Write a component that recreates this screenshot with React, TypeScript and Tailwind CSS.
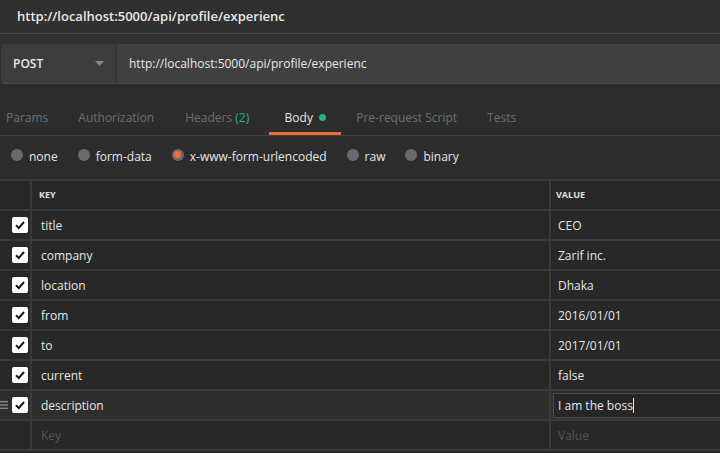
import React from "react";

const rows = [
  { k: "title", v: "CEO" },
  { k: "company", v: "Zarif inc." },
  { k: "location", v: "Dhaka" },
  { k: "from", v: "2016/01/01" },
  { k: "to", v: "2017/01/01" },
  { k: "current", v: "false" },
];

function Check() {
  return (
    <div className="w-[16px] h-[16px] rounded-[2px] bg-white flex items-center justify-center">
      <svg width="12" height="12" viewBox="0 0 12 12">
        <path d="M2 6.2 L4.8 9 L10 3" stroke="#1a1a1a" strokeWidth="2" fill="none" />
      </svg>
    </div>
  );
}

function Radio({ label, on }: { label: string; on?: boolean }) {
  return (
    <div className="flex items-center gap-[6px]">
      {on ? (
        <div className="w-[12px] h-[12px] rounded-full bg-[#6a6a6a] flex items-center justify-center -mt-[4px]">
          <div className="w-[7px] h-[7px] rounded-full bg-[#f26b3a]" />
        </div>
      ) : (
        <div className="w-[12px] h-[12px] rounded-full bg-[#6a6a6a] -mt-[4px]" />
      )}
      <span className="text-[#e6e6e6] text-[12px]">{label}</span>
    </div>
  );
}

export default function App() {
  return (
    <div
      className="w-[720px] h-[453px] overflow-hidden bg-[#2c2c2c] flex flex-col"
      style={{ fontFamily: '"Open Sans", sans-serif' }}
    >
      <div className="h-[34px] bg-[#303030] border-b border-[#464646] flex items-center pl-[17px] text-[13px] font-semibold text-[#e8e8e8]">
        http://localhost:5000/api/profile/experienc
      </div>
      <div className="bg-[#303030] pt-[10px] pl-[1px]">
        <div className="h-[40px] flex rounded-l-[3px] overflow-hidden border-b border-[#4a4a4a]">
          <div className="w-[116px] bg-[#3c3c3c] border-r border-[#333] flex items-center justify-between pl-[12px] pr-[12px]">
            <span className="text-[12px] font-semibold text-[#e8e8e8]">POST</span>
            <svg width="9" height="5" viewBox="0 0 9 5">
              <path d="M0 0 L9 0 L4.5 5 Z" fill="#8a8a8a" />
            </svg>
          </div>
          <div className="flex-1 bg-[#404040] flex items-center pl-[12px] text-[12px] text-[#e8e8e8]">
            http://localhost:5000/api/profile/experienc
          </div>
        </div>
      </div>
      <div className="h-[52px] bg-[#2c2c2c] border-b border-[#3f3f3f] flex items-end text-[12px] text-[#6e6e6e]">
        <div className="h-[40px] flex items-start pt-[14px] pl-[6px]">
          <span>Params</span>
          <span className="ml-[30px]">Authorization</span>
          <span className="ml-[31px]">
            Headers <span className="text-[#26b47f]">(2)</span>
          </span>
          <div className="ml-[20px] w-[72px] h-[26px] border-b-[3px] border-[#f26b3a] flex justify-center">
            <span className="text-[#e6e6e6] flex items-start">
              Body
              <span className="w-[7px] h-[7px] rounded-full bg-[#26b47f] ml-[6px] mt-[5px]" />
            </span>
          </div>
          <span className="ml-[15px]">Pre-request Script</span>
          <span className="ml-[30px]">Tests</span>
        </div>
      </div>
      <div className="h-[43px] flex items-center gap-[20px] pl-[11px] pb-[2px]">
        <Radio label="none" />
        <Radio label="form-data" />
        <Radio label="x-www-form-urlencoded" on />
        <Radio label="raw" />
        <Radio label="binary" />
      </div>
      <div className="bg-[#282828] border-t-2 border-[#3a3a3a] flex-1 flex flex-col">
        <div className="h-[30px] flex border-b-2 border-[#3a3a3a] text-[9px] font-bold text-[#e0e0e0]">
          <div className="w-[32px] shrink-0 border-r-2 border-[#3a3a3a]" />
          <div className="w-[519px] shrink-0 border-r-2 border-[#3a3a3a] flex items-center pl-[7px]">KEY</div>
          <div className="flex-1 min-w-0 flex items-center pl-[5px]">VALUE</div>
        </div>
        {rows.map((r) => (
          <div key={r.k} className="h-[30px] flex border-b-2 border-[#3a3a3a] text-[12px] text-[#e6e6e6]">
            <div className="w-[32px] shrink-0 border-r-2 border-[#3a3a3a] flex items-center pl-[12px]">
              <Check />
            </div>
            <div className="w-[519px] shrink-0 border-r-2 border-[#3a3a3a] flex items-center pl-[9px] pt-[2px]">{r.k}</div>
            <div className="flex-1 min-w-0 flex items-center pl-[7px] pt-[2px]">{r.v}</div>
          </div>
        ))}
        <div className="h-[30px] flex border-b-2 border-[#3a3a3a] text-[12px] text-[#e6e6e6] bg-[#2e2e2e]">
          <div className="w-[32px] shrink-0 border-r-2 border-[#3a3a3a] flex items-center">
            <svg width="8" height="8" viewBox="0 0 8 8" className="mr-[4px]">
              <rect x="0" y="0" width="8" height="1.4" fill="#8a8a8a" />
              <rect x="0" y="3.3" width="8" height="1.4" fill="#8a8a8a" />
              <rect x="0" y="6.6" width="8" height="1.4" fill="#8a8a8a" />
            </svg>
            <Check />
          </div>
          <div className="w-[519px] shrink-0 border-r-2 border-[#3a3a3a] flex items-center pl-[9px] pt-[2px]">description</div>
          <div className="flex-1 min-w-0 overflow-hidden flex items-center pl-[2px] pt-[1px]">
            <div className="w-[180px] shrink-0 h-[25px] border border-[#4a4a4a] bg-[#262626] flex items-center pl-[4px]">
              I am the boss
              <span className="w-[1px] h-[15px] bg-[#e6e6e6]" />
            </div>
          </div>
        </div>
        <div className="h-[30px] flex border-b-2 border-[#3a3a3a] text-[12px] text-[#555555]">
          <div className="w-[32px] shrink-0 border-r-2 border-[#3a3a3a]" />
          <div className="w-[519px] shrink-0 border-r-2 border-[#3a3a3a] flex items-center pl-[9px] pt-[2px]">Key</div>
          <div className="flex-1 min-w-0 flex items-center pl-[7px] pt-[2px]">Value</div>
        </div>
      </div>
    </div>
  );
}
